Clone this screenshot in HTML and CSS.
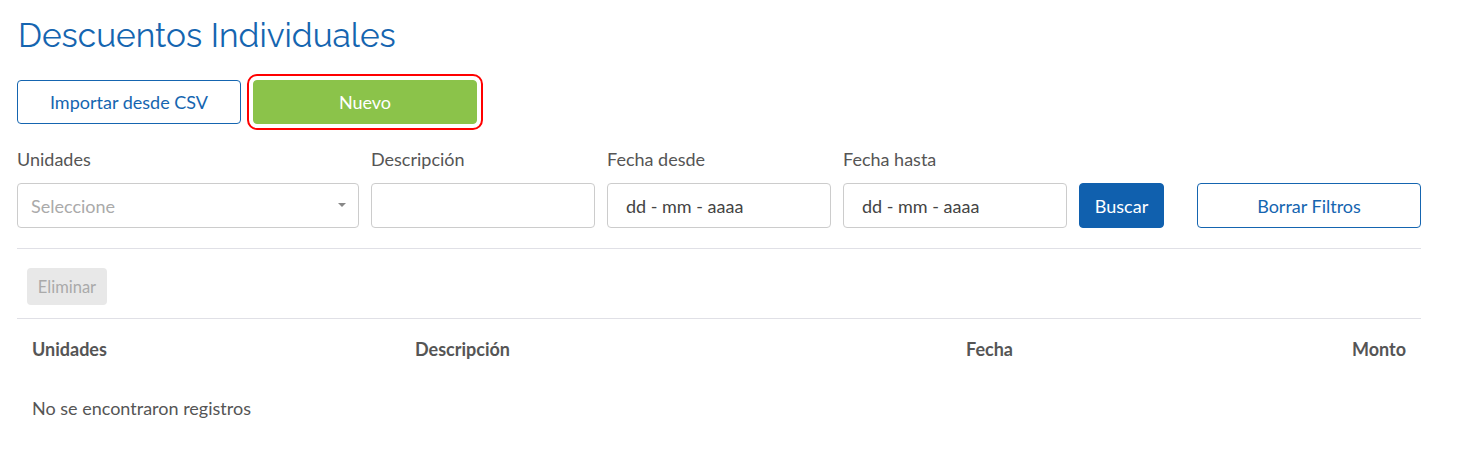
FILE: index.html
```html
<!DOCTYPE html>
<html lang="es">
<head>
<meta charset="utf-8">
<title>Descuentos Individuales</title>
<link rel="stylesheet" href="styles.css">
</head>
<body>
<div class="page">
  <h1 class="title">Descuentos Individuales</h1>
  <div class="actions">
    <button class="btn btn-outline btn-lg">Importar desde CSV</button>
    <button class="btn btn-green btn-lg focused">Nuevo</button>
  </div>
  <div class="filters">
    <div class="field f-unidades">
      <label class="label">Unidades</label>
      <div class="select">
        <span class="placeholder">Seleccione</span>
        <span class="caret"></span>
      </div>
    </div>
    <div class="field f-mid">
      <label class="label">Descripción</label>
      <div class="input"></div>
    </div>
    <div class="field f-mid">
      <label class="label">Fecha desde</label>
      <div class="input"><span class="date">dd - mm - aaaa</span></div>
    </div>
    <div class="field f-mid">
      <label class="label">Fecha hasta</label>
      <div class="input"><span class="date">dd - mm - aaaa</span></div>
    </div>
    <div class="field f-buscar">
      <button class="btn btn-blue">Buscar</button>
    </div>
    <div class="field f-borrar">
      <button class="btn btn-outline">Borrar Filtros</button>
    </div>
  </div>
  <div class="toolbar">
    <button class="btn btn-disabled">Eliminar</button>
  </div>
  <div class="table">
    <div class="row head">
      <div class="c1">Unidades</div>
      <div class="c2">Descripción</div>
      <div class="c3">Fecha</div>
      <div class="c4">Monto</div>
    </div>
    <div class="empty">No se encontraron registros</div>
  </div>
</div>
</body>
</html>
```
FILE: styles.css
```css
* { box-sizing: border-box; }
html, body { margin: 0; padding: 0; background: #fff; }
body {
  font-family: "Source Sans Pro", Lato, "Liberation Sans", sans-serif;
  font-size: 18px;
  color: #555;
}
.page {
  width: 1404px;
  margin-left: 17px;
  padding-top: 14px;
}
.title {
  margin: 0 0 0 1px;
  font-family: Raleway, "Open Sans", sans-serif;
  font-weight: 400;
  font-size: 33.5px;
  line-height: 44px;
  color: #1565b0;
}
.actions {
  display: flex;
  gap: 12px;
  margin-top: 22px;
}
.btn {
  font-family: inherit;
  font-size: 18px;
  border-radius: 4px;
  border: 1px solid transparent;
  cursor: pointer;
  padding: 0;
}
.btn-lg { width: 224px; height: 44px; }
.btn-outline {
  background: #fff;
  border-color: #1565b0;
  color: #1565b0;
}
.btn-green {
  background: #8bc34a;
  border-color: #8bc34a;
  color: #fff;
}
.focused {
  outline: 2px solid #f00;
  outline-offset: 4px;
  border-radius: 4px;
}
.filters {
  display: flex;
  align-items: flex-end;
  gap: 12px;
  margin-top: 24px;
  padding-bottom: 20px;
  border-bottom: 1px solid #e0e0e6;
}
.field { display: flex; flex-direction: column; }
.label {
  font-size: 18px;
  line-height: 22px;
  margin-bottom: 13px;
  color: #555;
}
.f-unidades { width: 342px; }
.f-mid { width: 224px; }
.f-buscar { width: 85px; }
.f-borrar { width: 224px; margin-left: 21px; }
.select, .input {
  height: 45px;
  border: 1px solid #ccc;
  border-radius: 4px;
  display: flex;
  align-items: center;
  background: #fff;
}
.select { padding: 0 12px 0 13px; justify-content: space-between; }
.placeholder { color: #aaa; font-size: 18px; }
.caret {
  width: 0; height: 0;
  border-left: 4px solid transparent;
  border-right: 4px solid transparent;
  border-top: 4px solid #888;
  margin-top: -2px;
}
.input { padding: 0 18px; }
.date { font-size: 18px; color: #444; }
.btn-blue {
  height: 45px;
  width: 85px;
  background: #1060ae;
  border-color: #1060ae;
  color: #fff;
}
.f-borrar .btn { height: 45px; width: 224px; }
.toolbar {
  padding: 19px 10px 13px;
  border-bottom: 1px solid #e0e0e6;
}
.btn-disabled {
  width: 80px;
  height: 37px;
  background: #e8e8e8;
  color: #aaa;
  font-size: 16.5px;
  cursor: default;
}
.row {
  display: flex;
  padding: 0 15px;
}
.head {
  font-weight: 700;
  font-size: 18px;
  color: #555;
  height: 60px;
  align-items: center;
}
.c1 { width: 383px; }
.c2 { width: 551px; }
.c3 { width: 200px; }
.c4 { flex: 1; text-align: right; }
.empty {
  padding: 0 15px;
  font-size: 18px;
  line-height: 22px;
  margin-top: 18px;
}
```
